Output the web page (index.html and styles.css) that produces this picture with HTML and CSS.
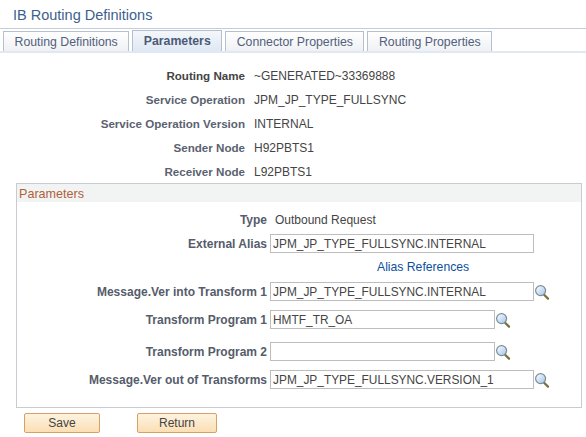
FILE: index.html
```html
<!DOCTYPE html>
<html lang="en">
<head>
    <meta charset="UTF-8">
    <title>IB Routing Definitions</title>
    <link rel="stylesheet" href="styles.css">
</head>
<body>
    <svg class="icon-defs" width="0" height="0">
        <defs>
            <linearGradient id="lensGlass" x1="0" y1="0" x2="1" y2="1">
                <stop offset="0" stop-color="#ffffff"/>
                <stop offset="1" stop-color="#9cc4ea"/>
            </linearGradient>
            <symbol id="lookup" viewBox="0 0 16 16">
                <path d="M9.6 10.2 L14 14.6" stroke="#77703a" stroke-width="2.2" stroke-linecap="round"/>
                <circle cx="6.6" cy="6.6" r="5" fill="url(#lensGlass)" stroke="#7d8c94" stroke-width="1.2"/>
            </symbol>
        </defs>
    </svg>

    <h1 class="page-title">IB Routing Definitions</h1>

    <nav class="tabs">
        <a class="tab">Routing Definitions</a>
        <a class="tab tab-active">Parameters</a>
        <a class="tab">Connector Properties</a>
        <a class="tab">Routing Properties</a>
    </nav>

    <div class="summary">
        <div class="summary-row"><span class="summary-label strong">Routing Name</span><span>~GENERATED~33369888</span></div>
        <div class="summary-row"><span class="summary-label">Service Operation</span><span>JPM_JP_TYPE_FULLSYNC</span></div>
        <div class="summary-row"><span class="summary-label">Service Operation Version</span><span>INTERNAL</span></div>
        <div class="summary-row"><span class="summary-label">Sender Node</span><span>H92PBTS1</span></div>
        <div class="summary-row"><span class="summary-label">Receiver Node</span><span>L92PBTS1</span></div>
    </div>

    <section class="panel">
        <h2 class="panel-title">Parameters</h2>
        <div class="form-row row-type">
            <span class="form-label">Type</span>
            <span class="type-value">Outbound Request</span>
        </div>
        <div class="form-row row-alias">
            <label class="form-label">External Alias</label>
            <input class="field field-long" type="text" value="JPM_JP_TYPE_FULLSYNC.INTERNAL">
        </div>
        <div class="alias-link-row"><a class="alias-link">Alias References</a></div>
        <div class="form-row row-in">
            <label class="form-label">Message.Ver into Transform 1</label>
            <input class="field field-long" type="text" value="JPM_JP_TYPE_FULLSYNC.INTERNAL">
            <svg class="lookup"><use href="#lookup"/></svg>
        </div>
        <div class="form-row row-prog1">
            <label class="form-label">Transform Program 1</label>
            <input class="field field-short" type="text" value="HMTF_TR_OA">
            <svg class="lookup"><use href="#lookup"/></svg>
        </div>
        <div class="form-row row-prog2">
            <label class="form-label">Transform Program 2</label>
            <input class="field field-short" type="text">
            <svg class="lookup"><use href="#lookup"/></svg>
        </div>
        <div class="form-row row-out">
            <label class="form-label">Message.Ver out of Transforms</label>
            <input class="field field-long" type="text" value="JPM_JP_TYPE_FULLSYNC.VERSION_1">
            <svg class="lookup"><use href="#lookup"/></svg>
        </div>
    </section>

    <div class="actions">
        <button class="btn btn-save">Save</button>
        <button class="btn btn-return">Return</button>
    </div>
</body>
</html>
```

FILE: styles.css
```css
* {
    margin: 0;
    padding: 0;
    box-sizing: border-box;
}

body {
    font-family: 'Liberation Sans', Arial, sans-serif;
    font-size: 12px;
    color: #444;
    background-color: #fff;
    overflow: hidden;
}

.icon-defs {
    position: absolute;
}

.page-title {
    height: 29px;
    padding: 6px 0 0 13px;
    font-size: 14.5px;
    line-height: 18px;
    font-weight: normal;
    color: #3d5f8f;
    border-bottom: 1px solid #c5ccd8;
}

.tabs {
    display: flex;
    align-items: flex-end;
    gap: 3px;
    height: 24px;
    padding-left: 3px;
    border-bottom: 2px solid #dfe8f3;
}

.tab {
    height: 20px;
    padding: 0 10.5px;
    font-size: 12.3px;
    line-height: 20px;
    color: #51607c;
    white-space: nowrap;
    border: 1px solid #b4bfcf;
    border-bottom: none;
    background: linear-gradient(#ffffff, #f0f1f4);
}

.tab-active {
    height: 21px;
    font-weight: bold;
    color: #4a5a78;
    background: linear-gradient(#f4f7fb, #dfe8f3);
}

.summary {
    display: flex;
    flex-direction: column;
    padding-top: 11px;
}

.summary-row {
    display: flex;
    height: 24px;
    align-items: baseline;
    gap: 9px;
    padding-top: 5px;
    line-height: 14px;
}

.summary-label {
    width: 245px;
    font-size: 11.6px;
    text-align: right;
    font-weight: bold;
    color: #5a6270;
}

.summary-label.strong {
    color: #444;
}

.panel {
    width: 566px;
    height: 225px;
    margin: -1px 0 0 16px;
    border: 1px solid #c8cbd2;
}

.panel-title {
    height: 18px;
    padding: 1px 0 0 2px;
    font-size: 12.6px;
    line-height: 18px;
    font-weight: normal;
    color: #b0603a;
    background-color: #f2f4f4;
}

.form-row {
    display: flex;
    align-items: center;
    height: 19px;
}

.form-label {
    flex: none;
    width: 250px;
    margin-right: 3px;
    text-align: right;
    font-weight: bold;
    color: #555c6b;
    white-space: nowrap;
}

.type-value {
    margin-left: 5px;
}

.row-type { margin-top: 8px; }
.row-alias { margin-top: 5px; }
.row-in { margin-top: 5px; }
.row-prog1 { margin-top: 9px; }
.row-prog2 { margin-top: 13px; }
.row-out { margin-top: 9px; }

.alias-link-row {
    height: 24px;
    padding: 2px 0 0 360px;
    font-size: 12.2px;
    line-height: 24px;
}

.alias-link {
    color: #0b4f9e;
}

.field {
    height: 19px;
    padding: 0 2px;
    font-family: inherit;
    font-size: 11.9px;
    color: #444;
    border: 1px solid #bdbdbd;
    background-color: #fff;
}

.field-long {
    width: 264px;
}

.field-short {
    width: 225px;
}

.lookup {
    width: 16px;
    height: 16px;
}

.actions {
    display: flex;
    padding: 5px 0 0 24px;
}

.btn {
    height: 20px;
    font-family: inherit;
    font-size: 12px;
    color: #444;
    border: 1px solid #d9a066;
    border-radius: 2px;
    background: linear-gradient(#fdf3e0, #fbdfb4);
}

.btn-save {
    width: 76px;
}

.btn-return {
    width: 80px;
    margin-left: 37px;
}
```
